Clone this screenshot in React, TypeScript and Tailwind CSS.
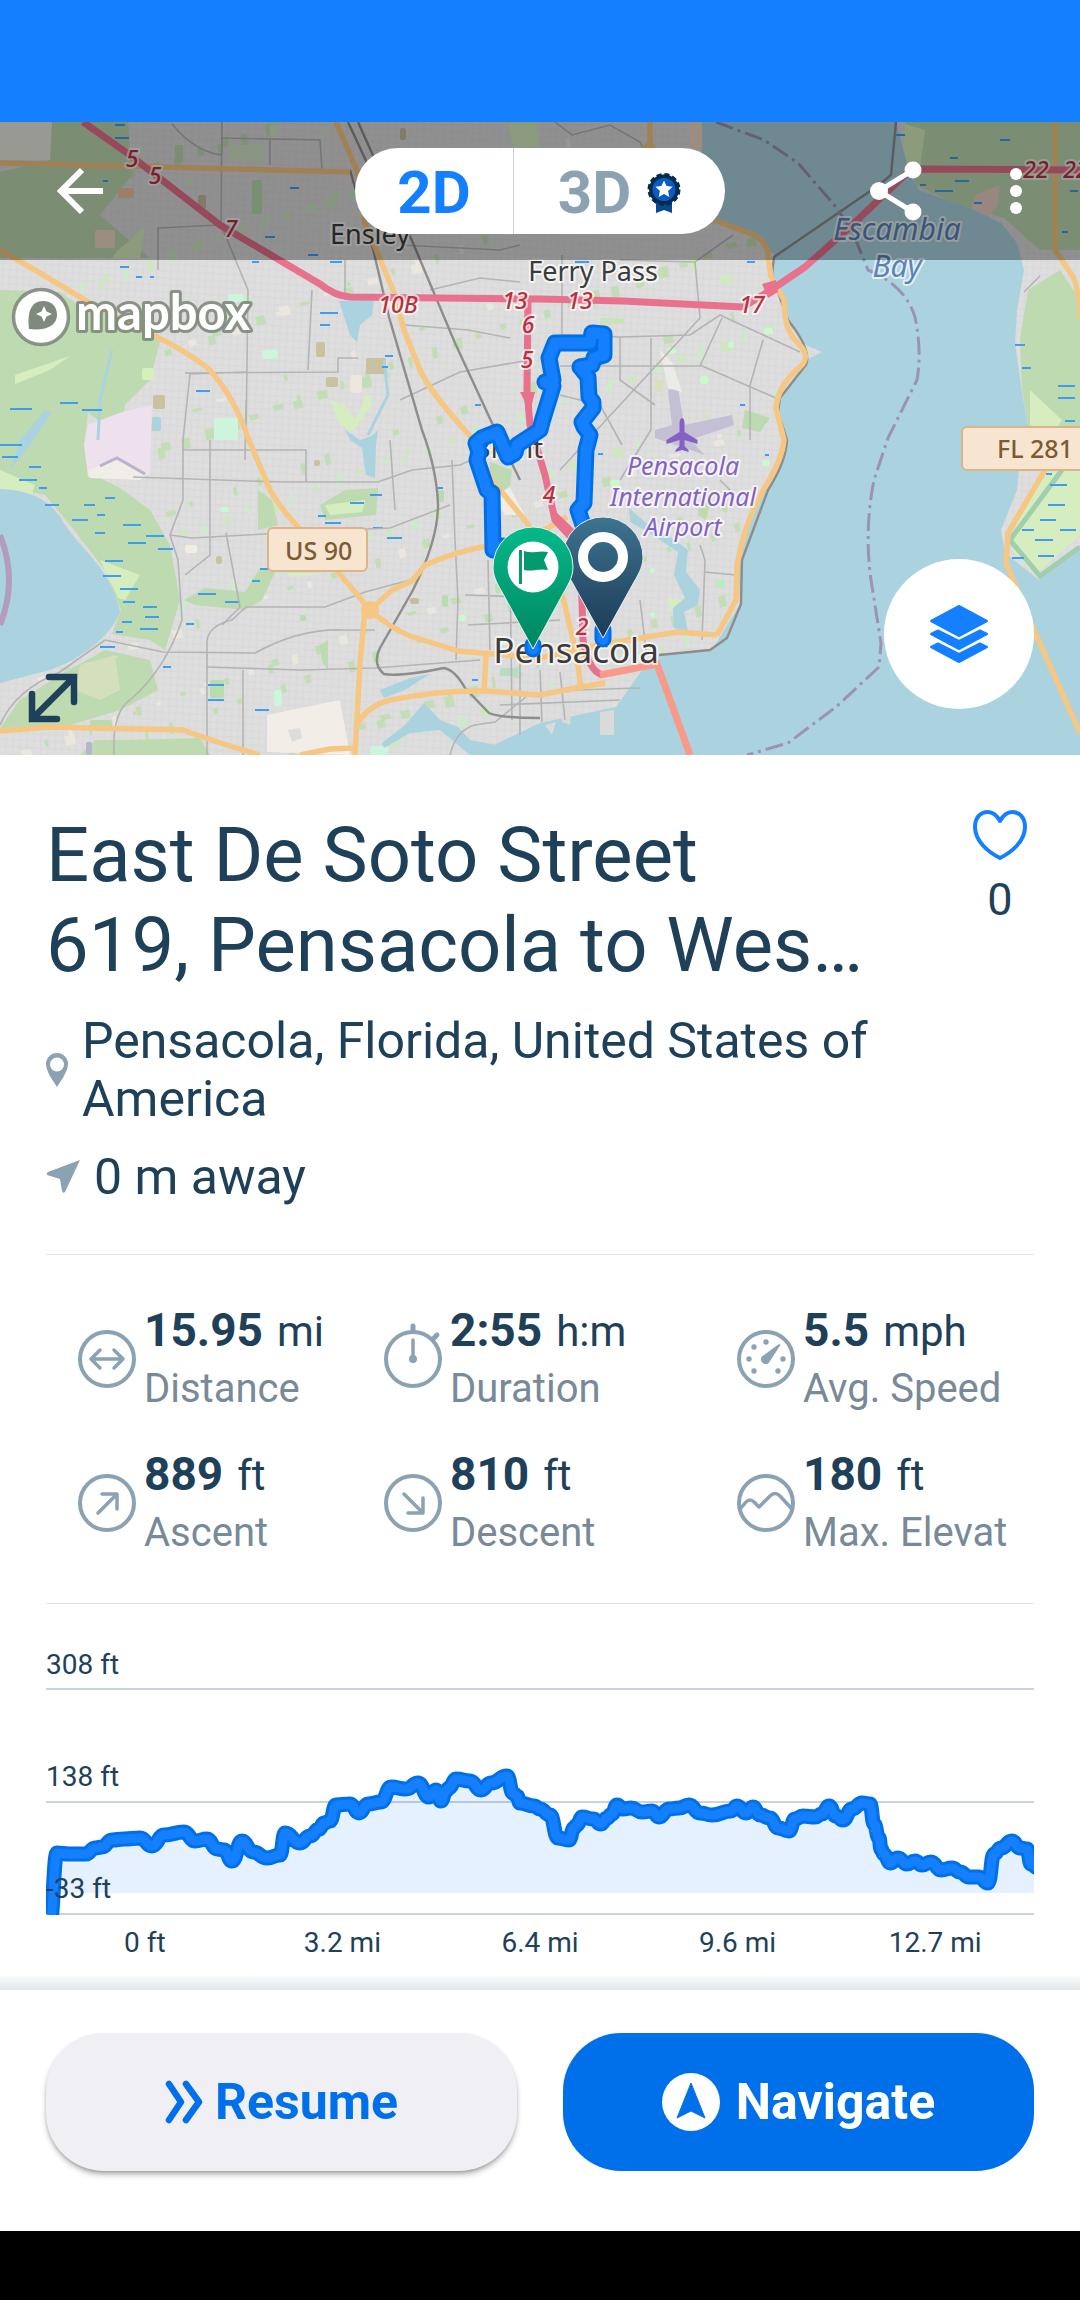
import type { ReactNode } from 'react';

const majorRoads = [
  'M0 163 L125 166 L350 172',
  'M336 122 L358 173 L365 223 L393 290 L404 330 L420 370 Q430 392 470 436 L492 480 L527 523 L545 550 L563 597 L577 657 L581 690',
  'M0 250 L40 273 L110 315 Q180 345 210 370 Q236 400 248 438 L270 490 Q280 508 298 527 L339 573 L370 610 Q390 628 410 636 L458 651 L540 658 L609 643 L678 632 L717 635',
  'M370 610 L392 590 L412 581 L425 565 Q455 552 482 547 L530 538 L567 517',
  'M365 610 L360 663 L355 755',
  'M0 731 L50 727 L183 730 Q215 742 260 755 M300 755 L330 749 L355 748',
  'M358 723 Q368 706 390 700 Q440 690 486 691 L540 695 L581 687 L605 683',
  'M486 655 L484 692',
  'M650 122 L650 143 L620 170 M650 143 L680 185 M714 220 L752 234 Q768 242 768 255 L771 277 L784 300 Q784 330 797 342 Q812 356 800 367 Q778 385 776 408 L784 440 Q782 460 765 487 Q745 520 737 565 L736 600 L717 635',
  'M1055 122 L1055 250 L1072 275 Q1080 290 1080 317',
  'M1045 470 L1008 533 L1006 563 L1034 630 L1080 733',
];

const minorRoads = [
  'M222 122 L221 225 L248 290 L246 438 M246 400 L245 460 M220 225 L158 228 L158 270',
  'M222 138 L320 140 L322 170 M270 138 L270 165 M172 124 Q195 152 222 155',
  'M185 373 L338 372 L338 358 L358 358 M248 372 L190 374 L183 440 L183 500 L170 535 L178 560 L182 620 Q165 670 130 700 Q112 712 114 755',
  'M133 477 L280 482 L378 482 L412 470 L460 465 L500 448',
  'M210 440 L210 555 L185 575 M183 450 L306 450 L306 482',
  'M170 535 L192 538 L300 532 L390 528 L450 505',
  'M207 755 L207 640 Q210 625 232 620 L246 607 L325 607 L365 592 L410 580 M105 640 L163 652 L255 653 Q300 628 345 630 L375 630',
  'M207 667 L300 670 L375 668 L480 660 M243 670 L243 755 M226 533 L240 607 L222 625',
  'M105 640 L60 672 Q15 690 0 725 M450 755 Q456 730 475 725 L495 722 L526 697',
  'M345 260 L345 300 M312 290 L308 370 M405 325 L468 330 L510 338 M400 400 L460 372 L530 360',
  'M540 165 L610 168 L660 158 M620 260 L695 262 L733 235 M695 262 L700 318 L560 470',
  'M555 122 L572 135 L610 125 L640 142 L670 200 M562 255 L562 335 L620 337 L690 335 L720 315 L800 352',
  'M560 366 L700 366 L722 318 M651 338 L651 430 L620 480 M763 340 L750 385 L750 440 M620 337 L620 380 L655 405',
  'M700 365 L776 398 M560 395 L600 405 L622 445 M720 480 L735 495 M700 545 L705 560 L702 640 M705 572 L736 575',
  'M452 460 L455 540 L458 600 L456 660 M488 560 L490 650 M510 560 L512 720 M470 460 L520 445 M465 595 L560 598 M468 625 L560 620',
  'M540 670 L542 722 M560 672 L565 720 M575 690 L640 688 M500 705 L620 700 M520 660 L520 735 M640 600 L646 650',
  'M390 440 L395 510 M430 290 L480 278 L520 282 M400 245 L500 250 L520 245',
  'M1054 122 L1054 168 M1024 292 L1040 276',
];

const rails = [
  'M348 122 L374 178 L404 250 M358 122 L384 180 L413 243 L455 343 L492 423 L520 480',
  'M350 170 L374 253 L389 317 L422 430 Q437 470 438 505 Q438 540 413 590 L380 648 Q372 664 384 674 Q400 677 444 668 Q455 670 465 688 L489 713 Q500 718 540 718',
  'M896 122 L891 175 L879 185 L774 257 L772 275 L788 320 Q812 350 806 365 L780 398 L778 412 L787 440 Q786 462 768 490 L742 560 L741 604 L727 638 L710 650 L659 655',
];

const greens = [
  'M52 122 L128 122 L132 175 L100 215 L150 258 L0 258 L0 172 L30 165 L50 160 Z',
  'M0 290 L60 292 L85 310 L128 318 L160 342 L150 380 L125 405 L122 440 L88 412 L84 445 L100 478 L120 488 L150 510 L170 545 L180 600 L165 650 L150 640 L112 634 L121 610 L105 570 L70 525 L45 495 L0 486 Z',
  'M184 600 L205 588 L245 592 L260 568 L275 572 L262 600 L245 610 L195 605 Z',
  'M258 490 L272 500 L278 525 L258 530 Z M320 505 L345 490 L378 488 L376 515 L325 520 Z',
  'M20 700 L60 675 L105 650 L150 660 L158 690 L120 710 L70 725 L0 728 Z',
  'M130 740 L200 738 L210 755 L80 755 L95 740 Z M320 645 L328 640 L328 670 L322 662 Z',
  'M905 122 L1080 122 L1080 250 L1040 250 L1004 218 L955 203 L915 185 Z',
  'M1028 290 L1060 270 L1080 300 L1080 438 L1030 438 L1022 390 L1020 340 Z',
  'M700 500 L712 498 L706 520 L698 515 Z M745 410 L770 418 L760 432 L742 428 Z M490 462 L512 470 L510 485 L500 495 L490 480 Z',
];

const paleGreens = [
  'M118 250 L130 240 L145 225 L140 258 L112 258 Z M15 375 L70 356 L50 370 L15 384 Z',
  'M0 470 L35 485 L30 500 L0 488 Z M100 560 L140 575 L125 600 L118 598 Z',
  'M330 400 L345 405 L355 420 L368 392 L372 405 L352 432 L340 425 Z',
  'M325 505 L365 500 L362 512 L330 515 Z M90 665 L120 655 L80 680 Z',
  'M905 124 L925 130 L920 168 L902 165 Z M1030 390 L1062 420 L1050 438 L1030 425 Z',
  'M1042 472 L1080 470 L1080 535 L1035 575 L1012 550 L1014 530 Z',
  'M508 125 L535 122 L540 145 L515 150 Z M287 573 L325 573 L310 576 L290 576 Z',
  'M668 598 L685 600 L670 612 Z M1060 748 L1080 748 L1080 755 L1060 755 Z M565 720 L575 718 L573 732 Z',
];

// x, y, width
const marshLines: [number, number, number][] = [
  [115, 125, 10], [115, 138, 14], [103, 181, 5], [290, 188, 9], [265, 237, 10], [308, 255, 10],
  [330, 262, 12], [252, 262, 7], [120, 267, 9], [136, 277, 6], [150, 277, 4], [320, 313, 18],
  [320, 325, 10], [60, 403, 18], [82, 410, 20], [10, 409, 22], [196, 391, 14], [385, 356, 8],
  [382, 367, 6], [0, 445, 22], [2, 457, 16], [29, 467, 12], [19, 480, 18], [39, 488, 8],
  [45, 505, 14], [84, 505, 11], [105, 498, 10], [97, 515, 8], [72, 520, 16], [95, 533, 10],
  [123, 525, 18], [146, 536, 18], [128, 543, 18], [158, 549, 15], [105, 561, 18], [103, 576, 18],
  [120, 589, 18], [123, 602, 12], [143, 607, 14], [145, 617, 14], [122, 622, 10], [140, 629, 18],
  [116, 632, 7], [100, 647, 15], [198, 594, 18], [225, 602, 15], [252, 581, 8], [260, 569, 8],
  [186, 624, 8], [163, 667, 8], [208, 685, 16], [208, 700, 16], [318, 516, 8], [325, 523, 16],
  [370, 495, 12], [350, 503, 14], [373, 528, 10], [387, 538, 15], [437, 488, 6], [475, 405, 6],
  [896, 135, 9], [1000, 140, 10], [950, 158, 8], [955, 181, 14], [935, 191, 18], [974, 203, 8],
  [920, 185, 6], [1062, 232, 6], [1070, 191, 8], [1015, 345, 10], [1022, 368, 9], [1058, 386, 17],
  [1058, 398, 17], [1065, 421, 10], [1050, 485, 17], [1048, 505, 17], [1040, 520, 16], [1060, 530, 16],
  [1022, 530, 12], [1035, 540, 18], [1038, 556, 16], [1012, 558, 12], [1046, 474, 6], [575, 262, 14],
  [747, 262, 8], [740, 405, 5], [598, 454, 5], [765, 455, 4], [472, 680, 6], [255, 710, 14],
];

// x, y, width, height, fill
const patches: [number, number, number, number, string][] = [
  [175, 145, 8, 18, '#b9dcae'], [252, 180, 10, 34, '#b9dcae'], [270, 125, 8, 12, '#cdebc9'],
  [228, 145, 36, 15, '#d2e6c8'], [400, 128, 6, 12, '#c6bda0'], [198, 195, 8, 14, '#c6bda0'],
  [95, 230, 20, 18, '#f0d9c6'], [118, 188, 16, 10, '#eec4a8'], [228, 294, 16, 8, '#cdf5dc'],
  [262, 350, 16, 9, '#cdf5dc'], [214, 418, 24, 22, '#cdf5dc'], [152, 417, 9, 14, '#aad3df'],
  [316, 342, 9, 15, '#c9c2a0'], [366, 358, 20, 16, '#c9c2a0'], [153, 395, 12, 14, '#c9c2a0'],
  [326, 377, 12, 10, '#c9c2a0'], [314, 460, 6, 6, '#c9c2a0'], [216, 556, 6, 8, '#c9c2a0'],
  [142, 368, 12, 12, '#d6efbb'], [220, 507, 9, 5, '#cdf5dc'], [185, 545, 12, 8, '#f2ede4'],
  [500, 668, 18, 8, '#b9dcc0'], [274, 690, 8, 16, '#cdf5dc'], [370, 746, 18, 9, '#cdf5dc'],
  [668, 348, 7, 6, '#c8facc'], [728, 342, 6, 6, '#c8facc'], [700, 376, 8, 8, '#c8facc'],
  [764, 328, 9, 6, '#c8facc'], [762, 460, 8, 6, '#c8facc'], [716, 580, 9, 8, '#b8edc4'],
  [610, 480, 10, 6, '#c8facc'], [720, 275, 12, 8, '#cdebbd'], [690, 258, 8, 12, '#cdebbd'],
  [745, 415, 14, 8, '#b9dcae'], [600, 318, 24, 6, '#c8e4b8'], [655, 380, 7, 12, '#dbe0b8'],
  [350, 375, 12, 18, '#ece7dd'], [442, 595, 6, 12, '#b9dcae'], [438, 490, 6, 12, '#b9dcae'],
  [210, 680, 14, 18, '#b9dcae'], [90, 720, 22, 8, '#b9dcae'], [410, 598, 9, 6, '#c6bda0'],
  [300, 615, 6, 6, '#b9dcae'], [458, 615, 8, 6, '#c8facc'], [650, 612, 5, 5, '#c8facc'],
  [650, 568, 5, 5, '#c8facc'], [540, 640, 8, 6, '#cdebbd'], [500, 640, 8, 5, '#c8facc'],
  [86, 742, 6, 13, '#b9b4cc'], [595, 715, 14, 22, '#d8d8d8'], [690, 122, 12, 38, '#f0d9c6'],
];

// small gardens and woods spread over the built-up area
const scatterFills = ['#c3deb7', '#cfe6c0', '#c3deb7', '#ebe7df', '#cdeacb', '#c3deb7'];
const scatter = Array.from({ length: 420 }, (_, i) => {
  const x = (i * 193.7) % 800;
  const y = 122 + ((i * 89.3 + (i % 7) * 31) % 633);
  const w = 3 + ((i * 5) % 8);
  const h = 3 + ((i * 7) % 9);
  return { x, y, w, h, fill: scatterFills[i % scatterFills.length] };
});

const routePath =
  'M503 546 L493 550 L492 493 L487 490 L477 460 L479 452 L476 443 L482 438 L497 432 L508 457 L515 453 L517 445 L540 430 L542 422 L553 386 L545 382 L553 380 L549 358 L555 343 L590 343 L592 333 L604 334 L604 355 L594 358 L592 365 L580 367 L588 377 L589 397 L593 402 L593 408 L582 422 L584 427 L590 435 L586 450 L584 503 L578 510 L583 525 M533 645 L533 649 M603 630 L603 639';

const shields = [
  ['5', 132, 167], ['5', 155, 184], ['7', 231, 237], ['10B', 398, 313], ['13', 515, 309], ['13', 580, 309],
  ['6', 528, 333], ['5', 527, 368], ['17', 752, 313], ['22', 1036, 178], ['22', 1076, 178], ['4', 549, 503],
  ['2', 582, 635],
] as const;

function TrailMap() {
  return (
    <svg viewBox="0 122 1080 633" className="block h-auto w-full" role="img" aria-label="Trail map">
      <defs>
        <pattern id="streets" width="7" height="7" patternUnits="userSpaceOnUse" patternTransform="rotate(3)">
          <rect width="7" height="7" fill="#dedede" />
          <path d="M0 3H7M3 0V7" stroke="#d8d8d8" strokeWidth="1" />
        </pattern>
        <linearGradient id="startPin" x1="0" y1="0" x2="0" y2="1">
          <stop offset="0" stopColor="#05b98a" />
          <stop offset="1" stopColor="#008560" />
        </linearGradient>
        <linearGradient id="endPin" x1="0" y1="0" x2="0" y2="1">
          <stop offset="0" stopColor="#3d7490" />
          <stop offset="1" stopColor="#1b3a55" />
        </linearGradient>
      </defs>
      <rect x="0" y="122" width="1080" height="633" fill="url(#streets)" />
      {scatter.map(({ x, y, w, h, fill }) => (
        <path key={`${x}-${y}`} d={`M${x} ${y} l${w} -2 l2 ${h} l-${w} 2 z`} fill={fill} />
      ))}
      <path d="M0 122 H52 V160 L0 160 Z" fill="#ecece4" />

      {greens.map((d) => (
        <path key={d} d={d} fill="#bddab1" />
      ))}
      {paleGreens.map((d) => (
        <path key={d} d={d} fill="#d6eebf" />
      ))}
      <path d="M84 445 L88 425 L122 412 L152 405 L150 475 L88 477 Z" fill="#eee0ec" />
      <path d="M88 470 L116 460 L146 475 L140 480 L90 478 Z" fill="#f1eee8" />
      <path d="M100 466 L117 458 L145 474" fill="none" stroke="#b8b2cf" strokeWidth="3" />
      <path d="M80 665 L115 655 L120 690 L100 700 L75 690 Z" fill="#d4dfbd" />
      <path d="M267 715 L340 700 L350 755 L267 752 Z" fill="#f2ede7" />
      <path d="M288 730 L300 728 L302 738 L292 742 Z" fill="#dcdcdc" />
      <path d="M493 495 L510 488 L525 515 L505 515 Z" fill="#f1ece6" />
      <path d="M975 195 L1000 185 L998 205 L988 217 L972 208 Z" fill="#e9cfc5" />
      {patches.map(([x, y, w, h, fill]) => (
        <rect key={`${x}-${y}`} x={x} y={y} width={w} height={h} rx="2" fill={fill} />
      ))}

      {/* water */}
      <g fill="#aad3df">
        <path d="M0 489 C30 490 52 500 65 525 C80 548 112 570 120 612 C112 635 80 660 50 670 L0 683 Z" />
        <path d="M702 122 L896 122 L910 175 L919 190 L970 208 L1001 223 L1017 243 L1024 270 L1017 310 L1015 343 L1022 393 L1030 437 L1019 470 L1017 490 L1001 530 L1005 553 L1039 580 L1080 547 L1080 755 L494 755 L494 745 L540 723 L616 707 L640 673 L659 655 L712 650 L740 604 L738 560 L753 510 L786 450 L776 403 L806 360 L822 352 L806 345 L787 322 L773 280 L774 255 L756 236 L702 212 Z" />
        <path d="M382 743 L405 725 L424 703 L440 720 L458 727 L470 740 L496 745 L496 755 L470 755 L440 730 L410 733 L384 748 Z" />
        <path d="M339 301 L374 300 L372 315 L360 325 L357 342 L350 335 Z" />
        <path d="M345 430 L360 440 L372 436 L378 430 L376 445 L375 478 L366 475 L362 448 L350 440 Z" />
        <path d="M629 508 L645 522 L675 540 L688 550 L686 572 L700 590 L698 605 L684 612 L688 632 L674 628 L673 608 L685 598 L674 575 L678 552 L648 532 L630 522 Z" />
        <path d="M380 690 L410 678 L430 674 L405 690 L384 698 Z M20 440 L45 410 L52 412 L30 445 L10 470 Z" />
      </g>
      <path d="M1062 470 L1010 540 L1040 576 L1080 547" fill="none" stroke="#9fcfae" strokeWidth="5" />
      <path d="M98 440 L100 400 L112 350 M384 360 L388 395 L368 435" fill="none" stroke="#aad3df" strokeWidth="3" />
      <path d="M560 705 L572 705 L570 725 L562 722 Z M600 712 L614 710 L614 735 L600 735 Z M545 725 L556 722 L552 735 Z" fill="#dadada" />
      <g stroke="#3f9df0" strokeWidth="2">
        {marshLines.map(([x, y, w]) => (
          <path key={`${x}-${y}`} d={`M${x} ${y}h${w}`} />
        ))}
      </g>

      {/* airport runways */}
      <path d="M668 390 L678 388 L684 425 L732 415 L734 425 L690 440 L705 455 L655 438 L655 430 L672 425 Z" fill="#c4bfd4" />
      <path d="M660 350 L672 362 L682 392 L668 388 Z" fill="#edebe6" />

      <g fill="none" stroke="#b4b4b4" strokeWidth="1.6">
        {minorRoads.map((d) => (
          <path key={d} d={d} />
        ))}
      </g>
      <g fill="none" stroke="#8d8d8d" strokeWidth="2.4">
        {rails.map((d) => (
          <path key={d} d={d} />
        ))}
      </g>
      <g fill="none" stroke="#f6c783" strokeWidth="5.5" strokeLinejoin="round">
        {majorRoads.map((d) => (
          <path key={d} d={d} />
        ))}
      </g>
      <g fill="none" stroke="#e8718d" strokeWidth="7" strokeLinejoin="round">
        <path d="M83 122 L127 153 L162 180 L220 225 L320 284 Q335 296 350 297 L540 299 L623 301 L743 307 L771 290 L805 267 L850 227 L905 175 L919 169 L1080 170" />
        <path d="M528 299 L527 390 L530 425 L545 475 L555 520 L578 545 L582 600 L583 640 Q588 670 602 675" />
      </g>
      <path d="M600 675 L657 664 L690 755" fill="none" stroke="#f8998a" strokeWidth="7" />
      <path d="M762 284 L776 280 L778 292 L768 298 Z M520 392 L535 392 L530 412 Z M556 512 L575 530 L578 545 L560 530 Z" fill="#e8718d" />
      <circle cx="370" cy="610" r="9" fill="#f6c783" />
      <path
        d="M716 122 L764 140 L798 163 L836 207 L853 233 L868 270 Q905 285 915 317 Q922 350 917 380 L888 438 L874 480 Q864 530 871 580 L881 643 L879 667 L836 707 L788 743 L747 755"
        fill="none"
        stroke="#9c93b4"
        strokeWidth="3"
        strokeDasharray="18 5 3 5"
      />
      <path d="M0 535 Q18 580 0 625" fill="none" stroke="#b39cbc" strokeWidth="6" />

      {/* place labels */}
      <g
        fontFamily="'Noto Sans', sans-serif"
        stroke="#ffffff"
        strokeOpacity="0.7"
        strokeWidth="4"
        strokeLinejoin="round"
        paintOrder="stroke"
        textAnchor="middle"
      >
        <g fill="#3b3b3b" fontSize="27">
          <text x="370" y="244">Ensley</text>
          <text x="593" y="281">Ferry Pass</text>
          <text x="508" y="458">Brent</text>
          <text x="576" y="663" fontSize="35">Pensacola</text>
        </g>
        <g fill="#5b83b8" fontSize="30" fontStyle="italic">
          <text x="897" y="240">Escambia</text>
          <text x="897" y="277">Bay</text>
        </g>
        <g fill="#8461c4" fontSize="25" fontStyle="italic">
          <text x="683" y="475">Pensacola</text>
          <text x="683" y="506">International</text>
          <text x="683" y="536">Airport</text>
        </g>
        <g fill="#b5333f" fontSize="23" fontStyle="italic" fontWeight="500">
          {shields.map(([label, x, y]) => (
            <text key={`${label}-${x}`} x={x} y={y}>
              {label}
            </text>
          ))}
        </g>
      </g>
      <path d="M682 418 q2.500 0 2.500 6 v8 l13 8 v4 l-13 -4 v6 l4 4 v2 l-6.500 -2 l-6.500 2 v-2 l4 -4 v-6 l-13 4 v-4 l13 -8 v-8 q0 -6 2.500 -6z" fill="#8461c4" />
      <g fill="#f7e5d0" stroke="#dcb48c" strokeWidth="2">
        <rect x="268" y="528" width="99" height="43" rx="5" />
        <rect x="962" y="427" width="130" height="43" rx="5" />
      </g>
      <g fill="#7a5c33" fontFamily="'Noto Sans', sans-serif" fontSize="25" fontWeight="500">
        <text x="285" y="560">US 90</text>
        <text x="997" y="458">FL 281</text>
      </g>

      {/* recorded route */}
      <g fill="none" strokeLinecap="round" strokeLinejoin="round">
        <path d={routePath} stroke="#006fe6" strokeWidth="17" />
        <path d={routePath} stroke="#1480ff" strokeWidth="11" />
      </g>
      <g>
        <path d="M603 638 L572 582 C566 572 563 565 563 557 a40 40 0 0 1 80 0 C643 565 640 572 634 582 Z" fill="url(#endPin)" stroke="#e8eef2" />
        <circle cx="603" cy="557" r="20" fill="none" stroke="#ffffff" strokeWidth="10" />
      </g>
      <g>
        <path d="M533 649 L502 592 C496 582 493 575 493 567 a40 40 0 0 1 80 0 C573 575 570 582 564 592 Z" fill="url(#startPin)" stroke="#e8f5f0" />
        <circle cx="533" cy="567" r="25.500" fill="#ffffff" />
        <path d="M519 550 h3 v34 h-3z M524 551 q6 2 12 1 q6 -1 12 0 l-4 8 l4 10 q-6 -1 -12 0 q-6 1 -12 0z" fill="#05996f" />
      </g>

      <g stroke="#7f8a7c" strokeOpacity="0.9">
        <circle cx="41" cy="317" r="27.500" fill="#ffffff" strokeWidth="3.500" />
        <path d="M29 329 C27 312 31 301 43 301 C52 301 57 307 57 315 C57 327 43 331 29 329 Z" fill="#7f8a7c" stroke="none" />
        <path d="M44 306 l2.500 5.500 l5.500 2.500 l-5.500 2.500 l-2.500 5.500 l-2.500 -5.500 l-5.500 -2.500 l5.500 -2.500z" fill="#ffffff" stroke="none" />
        <text x="76" y="330" fill="#ffffff" strokeWidth="6" strokeLinejoin="round" paintOrder="stroke" fontFamily="Lato, sans-serif" fontWeight="700" fontSize="49">
          mapbox
        </text>
      </g>
    </svg>
  );
}

function PremiumBadge() {
  return (
    <svg viewBox="0 0 34 40" className="h-10 w-[34px]" aria-hidden="true">
      <path d="M9 28 H25 V40 L17 37 L9 40 Z" fill="#064a8c" />
      <circle cx="17" cy="16.500" r="15" fill="#062b50" stroke="#062b50" strokeWidth="3" strokeDasharray="5 2.850" />
      <circle cx="17" cy="16.500" r="11.500" fill="#0a5cc0" />
      <path d="M17 7.500 l2.600 5.600 l6 .7 l-4.500 4.100 l1.200 6 l-5.300 -3 l-5.300 3 l1.200 -6 l-4.500 -4.100 l6 -.7z" fill="#ffffff" />
    </svg>
  );
}

function StatIcon({ children }: { children: ReactNode }) {
  return (
    <svg
      viewBox="0 0 58 76"
      className="h-[76px] w-[58px] shrink-0"
      fill="none"
      stroke="#8aa2b2"
      strokeWidth="4"
      strokeLinecap="round"
      strokeLinejoin="round"
      aria-hidden="true"
    >
      <circle cx="29" cy="38" r="27" />
      {children}
    </svg>
  );
}

const stats = [
  {
    label: 'Distance',
    value: '15.95',
    unit: 'mi',
    icon: <path d="M14 38 H44 M22 29 L13 38 L22 47 M36 29 L45 38 L36 47" strokeWidth="3.500" />,
  },
  {
    label: 'Duration',
    value: '2:55',
    unit: 'h:m',
    icon: (
      <>
        <path d="M29 10 V5 M49 18 L53 14" strokeWidth="5" />
        <path d="M29 19 V36" strokeWidth="3.500" />
        <circle cx="29" cy="38" r="4" fill="#8aa2b2" stroke="none" />
      </>
    ),
  },
  {
    label: 'Avg. Speed',
    value: '5.5',
    unit: 'mph',
    icon: (
      <g fill="#8aa2b2" stroke="none">
        <path d="M43.500 24 L32 41.500 C29 45 23 42 24 37 L25 35.500 L42 23 Z" />
        <circle cx="29" cy="21" r="2.700" />
        <circle cx="17" cy="26" r="2.700" />
        <circle cx="12" cy="38" r="2.700" />
        <circle cx="17" cy="50" r="2.700" />
        <circle cx="41" cy="50" r="2.700" />
        <circle cx="46" cy="38" r="2.700" />
      </g>
    ),
  },
  {
    label: 'Ascent',
    value: '889',
    unit: 'ft',
    icon: <path d="M20 48 L39 29 M24 29 H39 V44" strokeWidth="3.500" />,
  },
  {
    label: 'Descent',
    value: '810',
    unit: 'ft',
    icon: <path d="M20 29 L39 48 M39 33 V48 H24" strokeWidth="3.500" />,
  },
  {
    label: 'Max. Elevat',
    value: '180',
    unit: 'ft',
    icon: <path d="M4 43 L9 37 Q13 33 17 37 L22 42 L33 31 Q38 26 43 31 L54 43" strokeWidth="3.500" />,
  },
];

const elevation: [number, number][] = [
  [4, 280], [11, 212], [23, 213], [40, 213], [49, 207], [56, 206], [66, 199], [78, 198], [94, 197],
  [106, 205], [118, 194], [138, 191], [149, 200], [161, 198], [171, 208], [178, 209], [186, 220], [196, 200],
  [207, 211], [221, 217], [234, 214], [239, 192], [254, 202], [264, 195], [273, 188], [278, 182], [284, 180],
  [290, 164], [304, 163], [313, 172], [322, 163], [335, 161], [345, 146], [360, 148], [372, 142], [383, 156],
  [390, 149], [395, 160], [400, 150], [403, 147], [410, 138], [424, 140], [435, 149], [445, 142], [461, 135],
  [467, 152], [471, 155], [474, 162], [488, 165], [494, 168], [504, 174], [512, 197], [523, 199], [528, 187],
  [531, 184], [536, 176], [547, 178], [555, 183], [561, 177], [566, 173], [571, 164], [577, 168], [585, 167],
  [596, 171], [606, 170], [613, 176], [623, 168], [633, 167], [643, 164], [654, 172], [666, 174], [685, 170],
  [691, 165], [700, 172], [707, 166], [714, 174], [724, 177], [732, 187], [743, 190], [749, 178], [757, 175],
  [769, 176], [776, 173], [783, 165], [790, 175], [797, 179], [806, 168], [816, 162], [824, 163], [828, 183],
  [833, 197], [835, 208], [838, 213], [844, 222], [852, 217], [861, 223], [869, 220], [876, 224], [885, 221],
  [895, 229], [906, 227], [914, 231], [923, 236], [933, 236], [942, 242], [948, 213], [955, 207],
  [966, 200], [974, 207], [981, 208], [985, 223], [992, 227],
];

const distances = ['0 ft', '3.2 mi', '6.4 mi', '9.6 mi', '12.7 mi'];

// joins the samples with curves that are flat at each sample
function curve(samples: [number, number][]) {
  return samples
    .map(([x, y], i) => {
      if (i === 0) return `M${x} ${y}`;
      const [px, py] = samples[i - 1];
      const mid = (px + x) / 2;
      return `C${mid} ${py} ${mid} ${y} ${x} ${y}`;
    })
    .join(' ');
}

function ElevationChart() {
  const line = curve(elevation);
  const area = `${curve([[6, 252], ...elevation.slice(1)])} V252 Z`;

  return (
    <svg viewBox="0 0 988 276" className="block h-auto w-full" role="img" aria-label="Elevation profile">
      <defs>
        <clipPath id="plot">
          <rect width="988" height="274" />
        </clipPath>
      </defs>
      <path d="M0 48H988M0 161H988M0 273H988" stroke="#c8d3da" strokeWidth="2" />
      <g clipPath="url(#plot)" fill="none" strokeLinejoin="round">
        <path d={area} fill="#1480ff" fillOpacity="0.11" />
        <path d={line} stroke="#0070ea" strokeWidth="15" />
        <path d={line} stroke="#1480ff" strokeWidth="9" />
      </g>
      <g fill="#1e4159" fontSize="28">
        <text x="0" y="33">308 ft</text>
        <text x="0" y="145">138 ft</text>
        <text x="0" y="257">-33 ft</text>
      </g>
    </svg>
  );
}

export default function App() {
  return (
    <div className="flex min-h-screen flex-col bg-white font-[Roboto,sans-serif] text-[#1e4159]">
      <div className="h-[122px] bg-[#1480ff]" />

      <div className="relative">
        <TrailMap />

        <header className="absolute inset-x-0 top-0 grid h-[138px] grid-cols-[1fr_auto_1fr] items-center bg-black/35 px-12">
          <button aria-label="Back" className="flex size-16 items-center justify-center">
            <svg viewBox="0 0 48 48" className="size-12" fill="none" stroke="#ffffff" strokeWidth="6" aria-hidden="true">
              <path d="M47 24 H5 M26 3 L5 24 L26 45" />
            </svg>
          </button>
          <div className="flex h-[86px] overflow-hidden rounded-full bg-white text-[60px] leading-none font-bold">
            <button className="w-[159px] border-r border-[#c8d3da] pt-1 text-[#1480ff]">2D</button>
            <button className="flex w-[211px] items-center justify-center gap-4 pt-1 text-[#8aa2b2]">
              3D
              <PremiumBadge />
            </button>
          </div>
          <div className="flex items-center justify-end gap-[72px]">
            <button aria-label="Share" className="flex size-16 items-center justify-center">
              <svg viewBox="0 0 54 60" className="h-[60px] w-[54px]" fill="#ffffff" aria-hidden="true">
                <path d="M44 9 L10 30 L44 51" fill="none" stroke="#ffffff" strokeWidth="5" />
                <circle cx="10" cy="30" r="9" />
                <circle cx="44" cy="9" r="8.500" />
                <circle cx="44" cy="51" r="8.500" />
              </svg>
            </button>
            <button aria-label="More" className="flex h-16 w-8 items-center justify-center">
              <svg viewBox="0 0 12 48" className="h-12 w-3" fill="#ffffff" aria-hidden="true">
                <circle cx="6" cy="7" r="6" />
                <circle cx="6" cy="24" r="6" />
                <circle cx="6" cy="41" r="6" />
              </svg>
            </button>
          </div>
        </header>

        <button aria-label="Expand map" className="absolute bottom-8 left-7">
          <svg viewBox="0 0 50 50" className="size-[50px]" fill="none" stroke="#1e4159" strokeWidth="6.500" strokeLinecap="round" aria-hidden="true">
            <path d="M6 44 L44 6 M21 4 H46 V29 M4 21 V46 H29" />
          </svg>
        </button>

        <button
          aria-label="Map layers"
          className="absolute right-[46px] bottom-[46px] flex size-[150px] items-center justify-center rounded-full bg-white"
        >
          <svg viewBox="0 0 58 58" className="size-[58px]" fill="#1480ff" stroke="#1480ff" strokeWidth="2" strokeLinejoin="round" aria-hidden="true">
            <path d="M29 1 L57 16 L29 31 L1 16 Z" />
            <path d="M1 29 L8 25.500 L29 36 L50 25.500 L57 29 L29 44 Z" />
            <path d="M1 42 L8 38.500 L29 49 L50 38.500 L57 42 L29 57 Z" />
          </svg>
        </button>
      </div>

      <main className="flex-1 px-[46px]">
        <section className="flex items-start justify-between border-b border-[#e5e5e5] pt-[55px] pb-12">
          <div className="min-w-0 flex-1">
            <h1 className="text-[76px] leading-[90px]">
              East De Soto Street
              <br />
              619, Pensacola to Wes…
            </h1>
            <div className="mt-[22px] flex items-center gap-[14px] text-[50px] leading-[58px]">
              <svg viewBox="0 0 22 34" className="h-[34px] w-[22px] shrink-0" aria-hidden="true">
                <path
                  d="M11 0 a11 11 0 0 1 11 11 C22 18 15 28 11 34 C7 28 0 18 0 11 A11 11 0 0 1 11 0 Z M11 4.500 a6.500 6.500 0 0 0 0 14 a6.500 6.500 0 0 0 0 -14 Z"
                  fill="#8aa2b2"
                  fillRule="evenodd"
                />
              </svg>
              <p>
                Pensacola, Florida, United States of
                <br />
                America
              </p>
            </div>
            <div className="mt-5 flex items-center gap-[14px] text-[50px] leading-[58px]">
              <svg viewBox="0 0 34 34" className="size-[34px]" fill="#8aa2b2" aria-hidden="true">
                <path d="M34 0 L19 32 Q17 34 16 31 L14 19 L1 15 Q0 13 2 12 Z" />
              </svg>
              <p>0 m away</p>
            </div>
          </div>
          <button aria-label="Like" className="flex w-[68px] flex-col items-center gap-3 text-[45px] leading-[56px]">
            <svg viewBox="0 0 54 50" className="h-[50px] w-[54px]" fill="none" stroke="#1480ff" strokeWidth="4" strokeLinejoin="round" aria-hidden="true">
              <path d="M27 11 C23 4 19 2 15 2 C7 2 2 8 2 17 C2 31 15 42 27 48 C39 42 52 31 52 17 C52 8 47 2 39 2 C35 2 31 4 27 11 Z" />
            </svg>
            0
          </button>
        </section>

        <section className="grid grid-cols-[306fr_353fr_297fr] gap-y-7 border-b border-[#e5e5e5] pt-[46px] pb-[42px] pl-8">
          {stats.map((stat) => (
            <div key={stat.label} className="flex items-center gap-2">
              <StatIcon>{stat.icon}</StatIcon>
              <div>
                <p className="flex items-baseline gap-[14px] text-[42px] leading-[58px]">
                  <strong className="text-[46px] font-bold">{stat.value}</strong>
                  {stat.unit}
                </p>
                <p className="text-[40px] leading-[56px] text-[#788a98]">{stat.label}</p>
              </div>
            </div>
          ))}
        </section>

        <section className="pt-[37px]">
          <ElevationChart />
          <div className="grid grid-cols-5 pt-2 text-center text-[28px] leading-[36px]">
            {distances.map((distance) => (
              <span key={distance}>{distance}</span>
            ))}
          </div>
        </section>
      </main>

      <div className="h-4 bg-linear-to-b from-white to-[#e1e6ea]" />
      <footer className="grid grid-cols-2 gap-[46px] px-[46px] pt-[43px] pb-[60px] text-[50px] font-bold">
        <button className="flex h-[138px] items-center justify-center gap-3 rounded-[58px] bg-[#efeff4] text-[#0070ea] shadow-md shadow-black/30">
          <svg viewBox="0 0 38 44" className="h-11 w-[38px]" fill="none" stroke="#0070ea" strokeWidth="6.500" strokeLinecap="round" strokeLinejoin="round" aria-hidden="true">
            <path d="M4 4 L16 22 L4 40 M21 4 L34 22 L21 40" />
          </svg>
          Resume
        </button>
        <button className="flex h-[138px] items-center justify-center gap-4 rounded-[58px] bg-[#0070ea] text-white">
          <svg viewBox="0 0 58 58" className="size-[58px]" aria-hidden="true">
            <circle cx="29" cy="29" r="29" fill="#ffffff" />
            <path d="M29 10 L43 45 L29 38 L15 45 Z" fill="#0070ea" stroke="#0070ea" strokeLinejoin="round" />
          </svg>
          Navigate
        </button>
      </footer>
      <div className="h-[69px] bg-black" />
    </div>
  );
}
